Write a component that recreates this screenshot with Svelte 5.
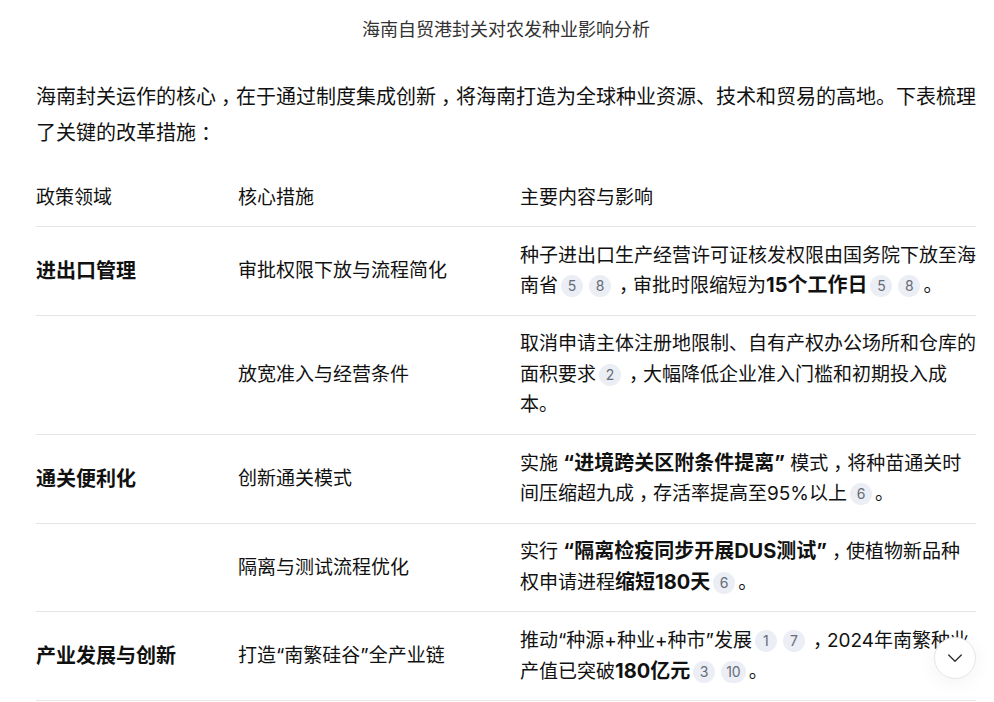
<script>
  const rows = [
    { area: '进出口管理', measure: '审批权限下放与流程简化', parts: ['种子进出口生产经营许可证核发权限由国务院下放至海南省', [5, 8], '，审批时限缩短为', { b: '15个工作日' }, [5, 8], '。'] },
    { area: '', measure: '放宽准入与经营条件', parts: ['取消申请主体注册地限制、自有产权办公场所和仓库的面积要求', [2], '，大幅降低企业准入门槛和初期投入成本。'] },
    { area: '通关便利化', measure: '创新通关模式', parts: ['实施 ', { b: '“进境跨关区附条件提离”' }, ' 模式，将种苗通关时间压缩超九成，存活率提高至95%以上', [6], '。'] },
    { area: '', measure: '隔离与测试流程优化', parts: ['实行 ', { b: '“隔离检疫同步开展DUS测试”' }, '，使植物新品种权申请进程', { b: '缩短180天' }, [6], '。'] },
    { area: '产业发展与创新', measure: '打造“南繁硅谷”全产业链', parts: ['推动“种源+种业+种市”发展', [1, 7], '，2024年南繁种业产值已突破', { b: '180亿元' }, [3, 10], '。'] }
  ];
  const split = (text) => text.split(/([，：])/);
  const intro = '海南封关运作的核心，在于通过制度集成创新，将海南打造为全球种业资源、技术和贸易的高地。下表梳理了关键的改革措施：';
</script>

{#snippet prose(text)}{#each split(text) as bit}{#if bit === '，' || bit === '：'}<span class="punct">{bit}</span>{:else}{bit}{/if}{/each}{/snippet}

<main class="page">
  <h1>海南自贸港封关对农发种业影响分析</h1>
  <p class="intro">{@render prose(intro)}</p>
  <table>
    <colgroup><col class="c1" /><col class="c2" /><col class="c3" /></colgroup>
    <thead>
      <tr><th>政策领域</th><th>核心措施</th><th>主要内容与影响</th></tr>
    </thead>
    <tbody>
      {#each rows as row}
        <tr>
          <td><strong class="label">{row.area}</strong></td>
          <td>{row.measure}</td>
          <td>{#each row.parts as part}{#if typeof part === 'string'}{@render prose(part)}{:else if Array.isArray(part)}{#each part as n}<span class="cite">{n}</span>{/each}{:else}<strong>{part.b}</strong>{/if}{/each}</td>
        </tr>
      {/each}
    </tbody>
  </table>
  <button class="down" aria-label="滚动到底部">
    <svg width="16" height="16" viewBox="0 0 16 16" fill="none"><path d="M1.7 5 8 11.3 14.3 5" stroke="#333" stroke-width="1.4" stroke-linecap="round" stroke-linejoin="round" /></svg>
  </button>
</main>

<style>
  :global(body) {
    margin: 0;
    background: #fff;
    overflow: hidden;
  }
  .page {
    position: relative;
    box-sizing: border-box;
    height: 702px;
    overflow: hidden;
    padding: 0 18px 0 36px;
    color: #111;
    font-family: Inter, "Noto Sans CJK SC", sans-serif;
    font-size: 19px;
  }
  h1 {
    margin: 0;
    padding-top: 17px;
    font-size: 18px;
    font-weight: 400;
    line-height: 26px;
    text-align: center;
    color: #333;
  }
  .intro {
    margin: 36px 0 0;
    font-size: 20px;
    line-height: 36px;
  }
  .punct {
    padding-left: 5px;
    letter-spacing: -5px;
  }
  table {
    width: 940px;
    margin-top: 18px;
    border-collapse: collapse;
    table-layout: fixed;
  }
  .c1 { width: 202px; }
  .c2 { width: 282px; }
  .c3 { width: 456px; }
  th {
    padding: 14px 0 13px;
    font-weight: 400;
    text-align: left;
    line-height: 30px;
  }
  tr {
    border-bottom: 1px solid #e5e5e5;
  }
  td {
    padding: 13.5px 0;
    line-height: 30.4px;
    vertical-align: middle;
  }
  tbody tr:nth-child(4) td {
    padding-bottom: 12.5px;
  }
  tbody tr:nth-child(5) td {
    padding: 14.5px 0 13.5px;
  }
  strong {
    font-size: 20px;
    font-weight: 700;
    line-height: 20px;
  }
  .label {
    line-height: 32px;
  }
  .cite {
    display: inline-block;
    min-width: 22px;
    box-sizing: border-box;
    height: 22px;
    margin: 0 3px;
    padding: 0 5px;
    border-radius: 11px;
    background: #ebeef4;
    color: #666c78;
    font-size: 14px;
    line-height: 22px;
    text-align: center;
    vertical-align: 1px;
  }
  .down {
    position: absolute;
    left: 934px;
    top: 637px;
    width: 42px;
    height: 42px;
    display: flex;
    align-items: center;
    justify-content: center;
    padding: 0;
    background: #fff;
    border: 1px solid #e6e6e6;
    border-radius: 50%;
    box-shadow: 0 4px 20px rgba(0, 0, 0, 0.05);
  }
</style>
